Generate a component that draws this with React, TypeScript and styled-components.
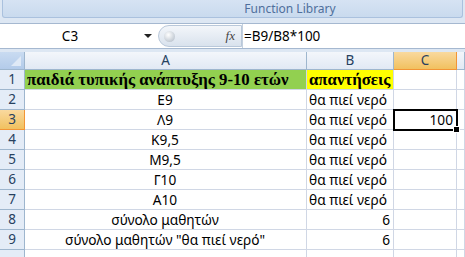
import styled, { createGlobalStyle } from "styled-components";

const GlobalStyle = createGlobalStyle`
  html, body { margin: 0; padding: 0; background: #fff; }
  body { width: 465px; height: 257px; overflow: hidden; font-family: "Noto Sans", "Liberation Sans", sans-serif; }
`;

const Window = styled.div`
  display: flex;
  flex-direction: column;
  width: 465px;
  height: 257px;
  overflow: hidden;
  background: #dde7f3;
`;

const RibbonGroup = styled.div`
  flex: none;
  height: 17px;
  margin: 0 2px;
  background: linear-gradient(#d6e3f3, #c9daee);
  border: 1px solid #aac1de;
  border-top: none;
  border-radius: 0 0 3px 3px;
  color: #4f6f9c;
  font-size: 12px;
  line-height: 17px;
  text-align: center;
  padding-left: 115px;
`;

const FormulaBar = styled.div`
  flex: none;
  display: flex;
  align-items: stretch;
  height: 24px;
  margin-top: 5px;
  background: #fff;
  border-top: 1px solid #a5b8d0;
  border-bottom: 1px solid #a5b8d0;
`;

const NameBox = styled.div`
  position: relative;
  width: 158px;
  display: flex;
  align-items: center;
  justify-content: center;
  font-size: 13.5px;
  color: #000;
  padding-right: 18px;
  box-sizing: border-box;
`;

const DropArrow = styled.span`
  position: absolute;
  right: 6px;
  top: 10px;
  width: 0;
  height: 0;
  border-left: 4px solid transparent;
  border-right: 4px solid transparent;
  border-top: 4px solid #222;
`;

const Grip = styled.div`
  display: flex;
  align-items: center;
  justify-content: flex-end;
  width: 84px;
  margin: 1px 0;
  background: linear-gradient(#f3f6fa, #d9e2ed);
  border: 1px solid #b9c8da;
  border-radius: 11px 0 0 11px;
  padding-right: 6px;
  box-sizing: border-box;
  position: relative;
  font-family: "Liberation Serif", serif;
  font-style: italic;
  font-size: 13px;
  color: #444;
`;

const GripDot = styled.span`
  position: absolute;
  left: 5px;
  top: 5px;
  width: 11px;
  height: 11px;
  border-radius: 50%;
  background: radial-gradient(circle at 40% 35%, #fff, #aab5c2);
`;

const Formula = styled.div`
  flex: 1;
  display: flex;
  align-items: center;
  padding-left: 1px;
  font-size: 13.5px;
  border-left: 1px solid #c4d0de;
`;

const Sheet = styled.div`
  display: grid;
  grid-template-columns: 25px 282px 87px 63px 1fr;
  grid-auto-rows: 20px;
  grid-template-rows: 18px;
  margin-top: 3px;
  background: #fff;
  flex: 1;
`;

const Corner = styled.div`
  background: linear-gradient(#c9dbf1, #b3cbea);
  border-right: 1px solid #9eb6ce;
  border-bottom: 1px solid #9eb6ce;
  position: relative;
  &::after {
    content: "";
    position: absolute;
    right: 3px;
    bottom: 3px;
    border-left: 10px solid transparent;
    border-bottom: 10px solid #dfe9f6;
  }
`;

const ColHead = styled.div<{ $active?: boolean }>`
  background: ${(p) =>
    p.$active ? "linear-gradient(#f9d99f, #f1c15f)" : "linear-gradient(#f3f6fb, #e1e9f4)"};
  border-right: 1px solid ${(p) => (p.$active ? "#f29536" : "#9eb6ce")};
  border-bottom: 1px solid ${(p) => (p.$active ? "#f29536" : "#9eb6ce")};
  font-size: 13.5px;
  text-align: center;
  line-height: 17px;
  color: #27415f;
`;

const RowHead = styled.div<{ $active?: boolean }>`
  background: ${(p) => (p.$active ? "linear-gradient(#f9d99f, #f1c15f)" : "#e4ecf7")};
  border-right: 1px solid ${(p) => (p.$active ? "#f29536" : "#9eb6ce")};
  border-bottom: 1px solid ${(p) => (p.$active ? "#f29536" : "#9eb6ce")};
  font-size: 13.5px;
  text-align: center;
  line-height: 19px;
  color: #27415f;
`;

const Cell = styled.div<{ $align?: "left" | "center" | "right"; $fill?: string; $head?: boolean }>`
  position: relative;
  background: ${(p) => p.$fill || "#fff"};
  border-right: 1px solid #d0d7e5;
  border-bottom: 1px solid #d0d7e5;
  text-align: ${(p) => p.$align || "left"};
  font-family: ${(p) => (p.$head ? '"Liberation Serif", serif' : '"Noto Sans", sans-serif')};
  font-weight: ${(p) => (p.$head ? 700 : 400)};
  font-size: ${(p) => (p.$head ? "16.8px" : "13.7px")};
  line-height: 19px;
  padding: 0 3px 0 2px;
  white-space: nowrap;
  overflow: visible;
  color: #000;
`;

const ActiveCell = styled(Cell)`
  outline: 2px solid #000;
  outline-offset: -1px;
  z-index: 1;
  &::after {
    content: "";
    position: absolute;
    right: -4px;
    bottom: -4px;
    width: 5px;
    height: 5px;
    background: #000;
    border: 1px solid #fff;
  }
`;

type Row = { a: string; b: string; bRight?: boolean };

const rows: Row[] = [
  { a: "Ε9", b: "θα πιεί νερό" },
  { a: "Λ9", b: "θα πιεί νερό" },
  { a: "Κ9,5", b: "θα πιεί νερό" },
  { a: "Μ9,5", b: "θα πιεί νερό" },
  { a: "Γ10", b: "θα πιεί νερό" },
  { a: "Α10", b: "θα πιεί νερό" },
  { a: "σύνολο μαθητών", b: "6", bRight: true },
  { a: 'σύνολο μαθητών "θα πιεί νερό"', b: "6", bRight: true },
];

export default function App() {
  return (
    <Window>
      <GlobalStyle />
      <RibbonGroup>Function Library</RibbonGroup>
      <FormulaBar>
        <NameBox>
          C3
          <DropArrow />
        </NameBox>
        <Grip>
          <GripDot />
          fx
        </Grip>
        <Formula>=B9/B8*100</Formula>
      </FormulaBar>
      <Sheet>
        <Corner />
        <ColHead>A</ColHead>
        <ColHead>B</ColHead>
        <ColHead $active>C</ColHead>
        <ColHead />

        <RowHead>1</RowHead>
        <Cell $head $fill="#92d050">παιδιά τυπικής ανάπτυξης 9-10 ετών</Cell>
        <Cell $head $fill="#ffff00">απαντήσεις</Cell>
        <Cell />
        <Cell />

        {rows.map((r, i) => {
          const n = i + 2;
          return [
            <RowHead key={`h${n}`} $active={n === 3}>
              {n}
            </RowHead>,
            <Cell key={`a${n}`} $align="center">
              {r.a}
            </Cell>,
            <Cell key={`b${n}`} $align={r.bRight ? "right" : "left"}>
              {r.b}
            </Cell>,
            n === 3 ? (
              <ActiveCell key={`c${n}`} $align="right">
                100
              </ActiveCell>
            ) : (
              <Cell key={`c${n}`} />
            ),
            <Cell key={`d${n}`} />,
          ];
        })}

        <RowHead />
        <Cell />
        <Cell />
        <Cell />
        <Cell />
      </Sheet>
    </Window>
  );
}
